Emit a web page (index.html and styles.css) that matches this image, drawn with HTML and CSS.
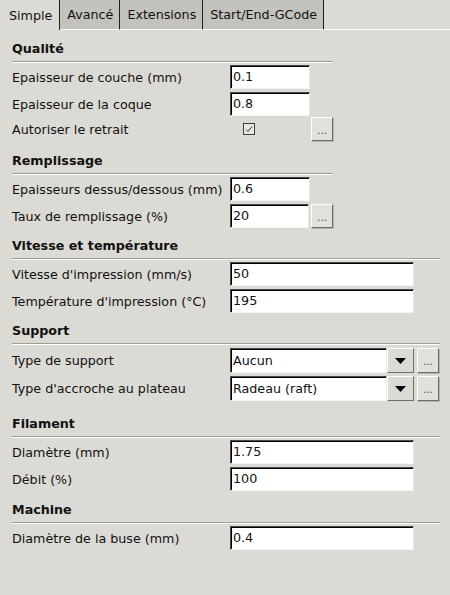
FILE: index.html
```html
<!DOCTYPE html>
<html lang="fr">
<head>
<meta charset="utf-8">
<title>Simple</title>
<link rel="stylesheet" href="styles.css">
</head>
<body>
<div class="tabs">
  <div class="tab tab--active">Simple</div>
  <div class="tab">Avancé</div>
  <div class="tab">Extensions</div>
  <div class="tab">Start/End-GCode</div>
  <div class="tab-fill"></div>
</div>
<div class="panel">
  <section class="group group--narrow">
    <h2 class="group-title">Qualité</h2>
    <div class="rows">
      <div class="row"><span class="lbl">Epaisseur de couche (mm)</span><span class="input input--short">0.1</span></div>
      <div class="row"><span class="lbl">Epaisseur de la coque</span><span class="input input--short">0.8</span></div>
      <div class="row row--check"><span class="lbl">Autoriser le retrait</span><span class="check-cell"><span class="checkbox"><svg width="10" height="10" viewBox="0 0 10 10"><path d="M2 5.5 L4 7.5 L8 2.5" fill="none" stroke="#333" stroke-width="1"/></svg></span></span><span class="btn">...</span></div>
    </div>
  </section>
  <section class="group group--narrow group--after-check">
    <h2 class="group-title">Remplissage</h2>
    <div class="rows">
      <div class="row"><span class="lbl">Epaisseurs dessus/dessous (mm)</span><span class="input input--short">0.6</span></div>
      <div class="row"><span class="lbl">Taux de remplissage (%)</span><span class="input input--short">20</span><span class="btn">...</span></div>
    </div>
  </section>
  <section class="group group--wide">
    <h2 class="group-title">Vitesse et température</h2>
    <div class="rows">
      <div class="row"><span class="lbl">Vitesse d'impression (mm/s)</span><span class="input input--long">50</span></div>
      <div class="row"><span class="lbl">Température d'impression (°C)</span><span class="input input--long">195</span></div>
    </div>
  </section>
  <section class="group group--wide group--combo">
    <h2 class="group-title">Support</h2>
    <div class="rows rows--combo">
      <div class="row row--combo"><span class="lbl">Type de support</span><span class="combo"><span class="combo-text">Aucun</span><span class="combo-arrow"><svg width="11" height="6" viewBox="0 0 11 6"><polygon points="0,0 11,0 5.5,6" fill="#000"/></svg></span></span><span class="btn btn--combo">...</span></div>
      <div class="row row--combo"><span class="lbl">Type d'accroche au plateau</span><span class="combo"><span class="combo-text">Radeau (raft)</span><span class="combo-arrow"><svg width="11" height="6" viewBox="0 0 11 6"><polygon points="0,0 11,0 5.5,6" fill="#000"/></svg></span></span><span class="btn btn--combo">...</span></div>
    </div>
  </section>
  <section class="group group--wide group--filament">
    <h2 class="group-title">Filament</h2>
    <div class="rows">
      <div class="row"><span class="lbl">Diamètre (mm)</span><span class="input input--long">1.75</span></div>
      <div class="row"><span class="lbl">Débit (%)</span><span class="input input--long">100</span></div>
    </div>
  </section>
  <section class="group group--wide">
    <h2 class="group-title">Machine</h2>
    <div class="rows">
      <div class="row"><span class="lbl">Diamètre de la buse (mm)</span><span class="input input--long">0.4</span></div>
    </div>
  </section>
</div>
</body>
</html>
```
FILE: styles.css
```css
html, body {
  margin: 0;
  padding: 0;
}
body {
  width: 450px;
  height: 595px;
  overflow: hidden;
  background: #dcdad5;
  font-family: "DejaVu Sans", sans-serif;
  font-size: 12.7px;
  color: #111;
}
.tabs {
  display: flex;
  height: 30px;
}
.tab {
  box-sizing: border-box;
  display: flex;
  align-items: center;
  height: 30px;
  padding: 0 6px 0 7px;
  background: #c4c2bc;
  border-right: 1px solid #1e1e1e;
  border-bottom: 1px solid #fff;
  white-space: nowrap;
}
.tab--active {
  background: transparent;
  border-bottom: none;
  padding: 0 7px 0 9px;
}
.tab-fill {
  flex: 1;
  border-bottom: 1px solid #fff;
}
.panel {
  padding: 1px 0 0 12px;
}
.group-title {
  margin: 0;
  font-size: 12.7px;
  font-weight: bold;
  line-height: 15px;
  padding: 10px 0 5px;
  border-bottom: 1px solid #9e9c97;
  box-shadow: 0 1px 0 #fff;
}
.group--narrow { width: 321px; }
.group--wide { width: 428px; }
.group--combo { padding-bottom: 5px; }
.group--filament { padding-bottom: 1px; }
.group--after-check { margin-top: 2px; }
.rows {
  display: flex;
  flex-direction: column;
  gap: 3px;
  padding-top: 3px;
}
.rows--combo { padding-top: 4px; }
.row {
  display: flex;
  align-items: center;
  height: 24px;
}
.row--check { margin-top: -2px; }
.row--combo { height: 25px; }
.lbl {
  width: 218px;
  flex-shrink: 0;
  white-space: nowrap;
}
.input {
  box-sizing: border-box;
  height: 24px;
  padding-left: 2px;
  line-height: 22px;
  background: #fff;
  border: 1px solid;
  border-color: #4a4a4a #e6e5e2 #f4f4f2 #4a4a4a;
  box-shadow: inset 1px 1px 0 #000;
}
.input--short { width: 80px; }
.input--long { width: 184px; }
.check-cell {
  box-sizing: border-box;
  width: 80px;
  padding-left: 13px;
  display: flex;
  align-items: center;
}
.checkbox {
  box-sizing: border-box;
  width: 12px;
  height: 12px;
  border: 1px solid #3c3c3c;
  background: #e8e7e3;
  display: flex;
  align-items: center;
  justify-content: center;
}
.btn {
  box-sizing: border-box;
  width: 22px;
  height: 24px;
  margin-left: 2px;
  background: #e2e0dc;
  border: 1px solid;
  border-color: #fff #6e6d69 #6e6d69 #fff;
  box-shadow: 1px 1px 0 #b5b3ae;
  font-size: 10px;
  line-height: 25px;
  text-align: center;
  color: #3a3a3a;
}
.combo {
  display: flex;
  height: 25px;
}
.combo-text {
  box-sizing: border-box;
  width: 157px;
  height: 25px;
  padding-left: 2px;
  line-height: 23px;
  background: #fff;
  border: 1px solid;
  border-color: #4a4a4a #e6e5e2 #f4f4f2 #4a4a4a;
  box-shadow: inset 1px 1px 0 #000;
}
.combo-arrow {
  box-sizing: border-box;
  width: 27px;
  height: 25px;
  background: #dcdad5;
  border: 1px solid;
  border-color: #fff #6e6d69 #6e6d69 #fff;
  display: flex;
  align-items: center;
  justify-content: center;
}
.btn--combo {
  width: 22px;
  height: 25px;
  margin-left: 3px;
  line-height: 26px;
}
```
